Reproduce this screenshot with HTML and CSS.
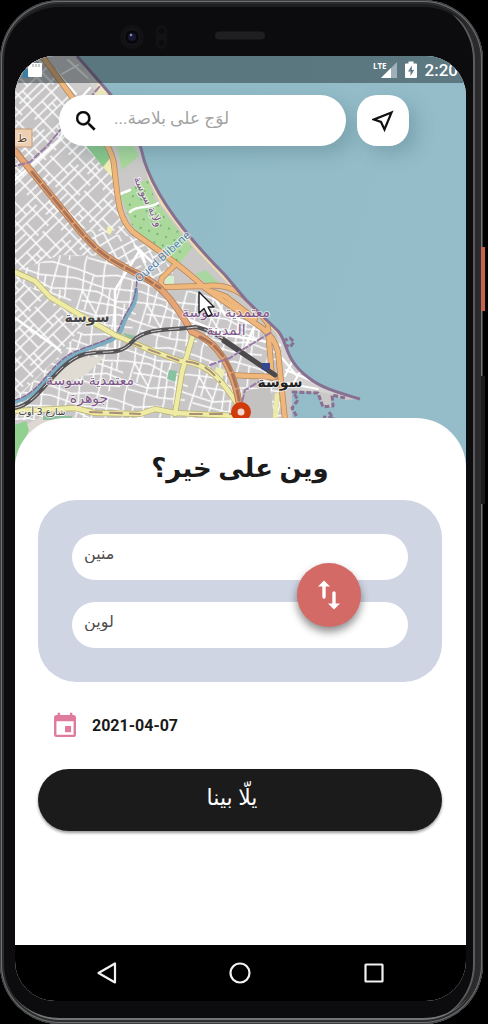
FILE: index.html
```html
<!DOCTYPE html>
<html lang="ar">
<head>
<meta charset="utf-8">
<meta name="viewport" content="width=device-width, initial-scale=1">
<title>وين على خير؟</title>
<link rel="stylesheet" href="styles.css">
</head>
<body>
<div class="phone">
  <span class="power-key"></span>
  <span class="volume-key"></span>
  <header class="bezel">
    <svg class="sensors" viewBox="0 0 150 28" aria-hidden="true">
      <circle cx="14" cy="14" r="12" fill="#121214"/>
      <circle cx="14" cy="14" r="7.500" fill="#08080c" stroke="#1a1b20"/>
      <circle cx="14" cy="14" r="4" fill="#171a30"/>
      <circle cx="13" cy="12" r="1.200" fill="#8d92b5"/>
      <rect x="38" y="2" width="11" height="24" rx="5.500" fill="#121214"/>
      <circle cx="43.500" cy="8" r="4" fill="#0c0c0e" stroke="#161618"/>
      <circle cx="43.500" cy="20" r="4" fill="#0c0c0e" stroke="#161618"/>
      <rect x="97" y="8.500" width="50" height="8" rx="4" fill="#1f1f21"/>
    </svg>
  </header>

  <div class="screen">
    <section class="map">
      <svg class="map-art" viewBox="15 56 451 412" preserveAspectRatio="xMinYMin slice" aria-hidden="true">
        <defs>
          <linearGradient id="sea" x1="0" y1="0" x2="1" y2="0.300">
            <stop offset="0" stop-color="#8fbac6"/>
            <stop offset="1" stop-color="#95bdc9"/>
          </linearGradient>
          <pattern id="grid-a" width="58" height="49" patternUnits="userSpaceOnUse" patternTransform="rotate(-44)">
            <rect width="58" height="49" fill="#c6c4c4"/>
            <path d="M0 4H58M0 12H32M0 19H58M26 26H58M0 32H58M0 39H30M0 45H58M5 0V49M18 4V32M31 0V49M44 0V26M52 19V49M11 32V45M24 12V19M38 32V49" stroke="#fff" stroke-width="1.500" fill="none"/>
          </pattern>
          <pattern id="grid-b" width="62" height="54" patternUnits="userSpaceOnUse" patternTransform="rotate(-28)">
            <rect width="62" height="54" fill="#c6c4c4"/>
            <path d="M0 5L62 5M0 13L28 15L62 13M0 22H62M14 29L62 31M0 38L62 38M0 46L34 48L62 46M4 0L4 54M13 5L15 22M24 0L24 54M33 13L36 38M44 0L44 54M54 5L52 31M14 22V46M56 38V54M34 38V54" stroke="#fff" stroke-width="1.500" fill="none"/>
          </pattern>
          <pattern id="grid-c" width="66" height="60" patternUnits="userSpaceOnUse" patternTransform="rotate(12)">
            <rect width="66" height="60" fill="#c8c6c6"/>
            <path d="M0 7L20 10L40 5L66 7M0 16L30 20L66 16M0 27L24 25L44 31L66 27M10 37L40 35L66 39M0 46L28 49L50 43L66 46M8 54L40 56L66 53M6 0L9 27L6 60M17 9L15 46M26 0L29 26L26 60M36 20L38 56M46 0L44 31L46 60M56 6L59 38M53 31L56 60M9 27L28 48" stroke="#fff" stroke-width="1.500" fill="none"/>
          </pattern>
          <pattern id="trees" width="9" height="9" patternUnits="userSpaceOnUse" patternTransform="rotate(20)">
            <rect width="9" height="9" fill="#abd99b"/>
            <circle cx="3" cy="4" r="0.900" fill="#5fa264"/>
          </pattern>
          <clipPath id="land">
            <path d="M15 56H77L105 88C125 110 138 132 144 160C155 195 182 232 225 275L246 300L278 331C288 342 284 360 309 378C323 389 340 393 360 399L345 400L331 395L332 407L323 407L318 393L292 391L292 418V470H15Z"/>
          </clipPath>
        </defs>
        <rect x="15" y="56" width="451" height="412" fill="url(#sea)"/>
        <g clip-path="url(#land)" fill="none" stroke-linecap="round" stroke-linejoin="round">
          <rect x="15" y="56" width="350" height="412" fill="#cbc9c8"/>
          <path d="M15 56H42L85 112L111 150L120 215L137 238L80 228L15 152Z" fill="url(#grid-a)"/>
          <path d="M15 152L80 228L137 238L175 270L160 290L100 262L60 300L15 275Z" fill="url(#grid-b)"/>
          <path d="M15 152L100 252L60 300L15 272Z" fill="url(#grid-a)"/>
          <path d="M60 255L105 256L165 292L205 290L275 340L285 380L285 420H15V272Z" fill="url(#grid-c)"/>
          <path d="M15 278L85 320L65 350L15 400Z" fill="url(#grid-a)"/>
          <path d="M45 56L80 58L98 85L75 95Z" fill="#cfcdcd"/>
          <path d="M62 74L78 65M55 70L76 94M68 60L90 80" stroke="#fff" stroke-width="2"/>
          <path d="M80 56L106 88L114 96L98 96L90 84Z" fill="#d9d5d1"/>
          <path d="M99 82L109 92L104 98L92 98Z" fill="#f1ebc0"/>
          <path d="M86 146H107L110 158L104 168Z" fill="#8ccb8c"/>
          <path d="M103 167L111 157L112 177Z" fill="#f3f0b5"/>
          <path d="M117 146H134L139 156L122 170Z" fill="#a9d99b"/>
          <path d="M120 194L148 179L155 200L192 248L176 268L150 247L132 225Z" fill="url(#trees)"/>
          <path d="M195 274L206 270L220 284L207 284Z" fill="#a8d7a0"/>
          <path d="M163 276H174V286H163Z" fill="#d6eed0"/>
          <path d="M108 226L113 229L110 235L106 232Z" fill="#f3f0b5"/>
          <path d="M48 370L80 358L105 356L85 376L45 388Z" fill="#e0dcd4"/>
          <path d="M14 437L26 425L40 417H78V470H15Z" fill="#ddd9d2"/>
          <path d="M15 425L26 421L29 430L15 462Z" fill="#91d18f"/>
          <path d="M169 370L177 371L175 382L167 379Z" fill="#88c2a0"/>
          <path d="M43 416H72V420H43ZM123 333L140 337L130 342Z" fill="#90bfa0"/>
          <path d="M216 367L225 370L221 383L214 378Z" fill="#efedb2"/>
          <path d="M243 392L270 386L275 425H243Z" fill="#c4c2c1"/>
          <path d="M276 322L286 340L292 370L345 397L320 392L292 389L281 382Z" fill="#d5d3d2"/>
          <path d="M282 358L297 376M286 370L310 380M292 362L285 376M300 372L292 386M280 382L318 389" stroke="#fff" stroke-width="2"/>
          <path d="M115 96L138 135L150 178L163 204L197 248L240 293L283 337" stroke="#f0dfae" stroke-width="4"/>
          <path d="M130 212C138 204 148 210 158 203M118 195L130 190M135 246L152 262M15 180L60 139L75 104L90 88" stroke="#fff" stroke-width="2.500"/>
          <path d="M115 350V290L140 250L145 262M60 350L15 318M185 318L225 335L258 340L280 345M210 290L225 315L255 325L242 355" stroke="#fff" stroke-width="2.500"/>
          <path d="M15 402C45 395 52 362 80 352C100 343 118 342 122 328C127 310 137 308 136 290" stroke="#7caec2" stroke-width="4"/>
          <path d="M15 400C43 393 50 360 79 350C98 342 116 340 120 326C127 308 137 304 137 275" stroke="#866a99" stroke-width="1.500" stroke-dasharray="5 2"/>
          <path d="M15 272L35 281L50 297L80 315L115 335L150 350L180 361C210 362 225 385 238 405M15 411L75 408L95 413L140 414L155 409L175 413L238 416M193 335L182 372L175 414" stroke="#b9b26d" stroke-width="6"/>
          <path d="M15 272L35 281L50 297L80 315L115 335L150 350L180 361C210 362 225 385 238 405M15 411L75 408L95 413L140 414L155 409L175 413L238 416M193 335L182 372L175 414M277 395L275 420" stroke="#eeeba4" stroke-width="4.500"/>
          <path d="M130 342L150 350L180 361C200 362 210 368 220 382M90 412L140 414M190 414H235" stroke="#a98e78" stroke-width="2" stroke-dasharray="12 8"/>
          <path d="M42 56L75 101C95 130 112 145 114 165C118 200 118 218 133 232C160 252 180 264 205 288L262 328Q275 338 278 352L285 420M176 264L162 278Q159 287 166 287L205 286C235 282 250 298 268 324M208 290L225 296L255 319M230 375L275 377M268 328L272 378" stroke="#b7875a" stroke-width="6"/>
          <path d="M42 56L75 101C95 130 112 145 114 165C118 200 118 218 133 232C160 252 180 264 205 288L262 328Q275 338 278 352L285 420M176 264L162 278Q159 287 166 287L205 286C235 282 250 298 268 324M208 290L225 296L255 319M230 375L275 377M268 328L272 378" stroke="#efb77b" stroke-width="4.500"/>
          <path d="M15 151L75 225C95 250 105 258 140 275C160 285 172 298 192 332C220 342 234 370 240 408" stroke="#b7845d" stroke-width="7"/>
          <path d="M15 151L75 225C95 250 105 258 140 275C160 285 172 298 192 332C220 342 234 370 240 408" stroke="#e5a576" stroke-width="5"/>
          <path d="M32 172L75 225C95 250 105 258 140 275L160 288M200 337C222 346 234 370 239 400" stroke="#ab7459" stroke-width="3" stroke-dasharray="13 4"/>
          <path d="M15 408C40 404 55 362 85 354C105 350 120 356 132 342C145 327 170 331 195 327C215 329 240 352 275 375" stroke="#555355" stroke-width="4"/>
          <path d="M15 408C40 404 55 362 85 354C105 350 120 356 132 342C145 327 170 331 195 327C215 329 240 352 275 375" stroke="#d5d3d3" stroke-width="1" stroke-dasharray="10 8"/>
          <path d="M224 341L275 375" stroke="#4b494b" stroke-width="5"/>
          <path d="M262 363H270V370H262Z" fill="#354790"/>
          <path d="M105 80L84 105L62 128L48 145L30 162L15 166M210 365L230 358L242 350L270 333M240 410L245 390L262 380" stroke="#9a7ba5" stroke-width="2" stroke-dasharray="6 3"/>
        </g>
        <g fill="none" stroke="#877091" stroke-linejoin="round">
          <path d="M77 56L105 88C125 110 138 132 144 160C155 195 182 232 225 275L246 300L278 331C288 342 284 360 309 378C323 389 340 393 360 399" stroke-width="3"/>
          <path d="M283 341L290 338L294 342L290 347L286 345M345 398L332 395L333 406L323 407L318 393L293 392L298 400L292 408L297 417M329 412L333 418L323 417" stroke-width="3" stroke-dasharray="5 2"/>
        </g>
        <rect x="10" y="129" width="22" height="18" rx="1" fill="#edcfb2" stroke="#c29a7a"/>
        <g class="map-labels">
          <text class="place-small" x="22" y="142">ط</text>
          <text class="river-name" transform="translate(139 283) rotate(-42)">Oued Blibene</text>
          <text class="district district-tilt" transform="translate(145 203) rotate(65)">ولاية سوسة</text>
          <text class="city" x="87" y="322">سوسة</text>
          <text class="city city-dark" x="280" y="387">سوسة</text>
          <text class="district" x="226" y="317">معتمدية سوسة</text>
          <text class="district" x="226" y="335">المدينة</text>
          <text class="district" x="90" y="385">معتمدية سوسة</text>
          <text class="district" x="89" y="403">جوهرة</text>
          <text class="street" x="42" y="415">شارع 3 أوت</text>
        </g>
        <path d="M231 412a10 10 0 0 1 20 0c0 6-6 9-10 16c-4-7-10-10-10-16z" fill="#d13b0c"/>
        <circle cx="241" cy="412" r="3.500" fill="#f0d9d0"/>
        <path d="M199 292v21l5-4.500 4 8 4-2-4-7.500h6z" fill="#fff" stroke="#1b1b22" stroke-width="1.400" stroke-linejoin="round"/>
      </svg>

      <div class="status-bar">
        <svg class="card-icon" viewBox="0 0 20 18" aria-hidden="true">
          <path d="M0 8h6v9H0z" fill="#3a7fa5"/>
          <path d="M9 2h9a1 1 0 0 1 1 1v12a1 1 0 0 1-1 1H6a1 1 0 0 1-1-1V6z" fill="#fff"/>
          <path d="M10 3v3M13 3v3M16 3v3" stroke="#9a9a9a"/>
        </svg>
        <div class="signal">
          <span class="network">LTE</span>
          <svg class="signal-icon" viewBox="0 0 16 16" aria-hidden="true">
            <path d="M16 0V16H0z" fill="#9fb1b8"/>
            <path d="M10 6V16H0z" fill="#fff"/>
          </svg>
        </div>
        <svg class="battery-icon" viewBox="0 0 12 18" aria-hidden="true">
          <path d="M3.500 0.500h5v2H11a1 1 0 0 1 1 1V16a1 1 0 0 1-1 1H1a1 1 0 0 1-1-1V3.500a1 1 0 0 1 1-1h2.500z" fill="#fff"/>
          <path d="M6.800 4.500L3 10.500h2.500V15L9.200 9H6.800z" fill="#5f7b85"/>
        </svg>
        <span class="clock">2:20</span>
      </div>

      <form class="search-row">
        <label class="search-box">
          <svg class="search-icon" viewBox="3 3 18 18" aria-hidden="true">
            <path d="M15.500 14h-.79l-.28-.27A6.471 6.471 0 0 0 16 9.500 6.500 6.500 0 1 0 9.500 16c1.610 0 3.090-.59 4.230-1.570l.27.28v.79l5 4.990L20.490 19l-4.990-5zm-6 0C7.010 14 5 11.990 5 9.500S7.010 5 9.500 5 14 7.010 14 9.500 11.990 14 9.500 14z" fill="#090909" stroke="#090909" stroke-width="0.300"/>
          </svg>
          <input class="search-input" type="text" dir="rtl" placeholder="لوَج على بلاصة..." aria-label="لوَج على بلاصة">
        </label>
        <button class="locate" type="button" aria-label="موقعي">
          <svg viewBox="0 0 22 22" aria-hidden="true">
            <path d="M19.500 2.500L2 9.500L9 12L12.500 19.500Z" fill="none" stroke="#111" stroke-width="2.200" stroke-linejoin="miter"/>
          </svg>
        </button>
      </form>
    </section>

    <main class="sheet">
      <h1 class="title" dir="rtl">وين على خير؟</h1>
      <div class="trip">
        <input class="field" type="text" dir="rtl" placeholder="منين" aria-label="منين">
        <input class="field" type="text" dir="rtl" placeholder="لوين" aria-label="لوين">
        <button class="swap" type="button" aria-label="تبديل">
          <svg viewBox="0 0 24 30" aria-hidden="true">
            <path d="M7 17V4M17 13V26" stroke="#fff" stroke-width="3.400" stroke-linecap="round"/>
            <path d="M7 0.500L13 6.500H1ZM17 29.500L11 23.500H23Z" fill="#fff"/>
          </svg>
        </button>
      </div>
      <button class="date" type="button">
        <svg viewBox="3 1 18 21" aria-hidden="true">
          <path d="M17 12h-5v5h5v-5zM16 1v2H8V1H6v2H5c-1.110 0-1.990.9-1.990 2L3 19a2 2 0 0 0 2 2h14c1.100 0 2-.9 2-2V5c0-1.100-.9-2-2-2h-1V1h-2zm3 18H5V8h14v11z" fill="#df7c9e"/>
        </svg>
        <time datetime="2021-04-07">2021-04-07</time>
      </button>
      <button class="go" type="submit" dir="rtl">يلّا بينا</button>
    </main>

    <nav class="system-nav">
      <button type="button" aria-label="رجوع"><svg viewBox="0 0 24 24" aria-hidden="true"><path d="M20 2.500V21.500L3.500 12Z"/></svg></button>
      <button type="button" aria-label="الرئيسية"><svg viewBox="0 0 24 24" aria-hidden="true"><circle cx="12" cy="12" r="9.500"/></svg></button>
      <button type="button" aria-label="التطبيقات"><svg viewBox="0 0 24 24" aria-hidden="true"><rect x="3.500" y="3.500" width="17" height="17" rx="0.500"/></svg></button>
    </nav>
  </div>
</div>
</body>
</html>
```
FILE: styles.css
```css
* {
  box-sizing: border-box;
}

body {
  margin: 0;
  background: #000;
  font-family: Roboto, "Noto Sans", "DejaVu Sans", sans-serif;
}

button,
input {
  margin: 0;
  border: 0;
  font: inherit;
}

button {
  display: flex;
  align-items: center;
  justify-content: center;
  padding: 0;
  background: none;
}

.phone {
  position: relative;
  display: flex;
  flex-direction: column;
  min-height: 100vh;
  margin-right: 5px;
  padding: 0 17px 23px 15px;
  border-radius: 60px;
  background: #0c0b0e;
  box-shadow:
    inset 0 0 0 1px #3c3e3f,
    inset 0 0 0 2px #6d7070,
    inset 0 0 0 4px #2c2d2e,
    inset 0 -6px 0 #737674,
    inset 0 8px 0 -1px #1d1e1f,
    inset -8px 0 0 #2a2a2c,
    inset -10px 0 0 #5b5b5c;
}

.power-key,
.volume-key {
  position: absolute;
  right: -2px;
  width: 4px;
}

.power-key {
  top: 247px;
  height: 64px;
  background: #c9614d;
}

.volume-key {
  top: 376px;
  height: 128px;
  background: #1b1b1c;
}

.bezel {
  height: 56px;
  padding: 23px 0 0 103px;
}

.sensors {
  display: block;
  width: 150px;
  height: 28px;
}

.screen {
  display: flex;
  flex: 1;
  flex-direction: column;
  overflow: hidden;
  border-radius: 40px;
  background: #fff;
}

.map {
  position: relative;
  min-height: 412px;
  background: #97bfcb;
}

.map-art {
  position: absolute;
  inset: 0;
  width: 100%;
  height: 100%;
}

.map-labels {
  font-family: "DejaVu Sans", sans-serif;
  text-anchor: middle;
  paint-order: stroke;
  stroke: rgba(255, 255, 255, 0.6);
  stroke-width: 2px;
}

.district {
  fill: #7d5588;
  font-size: 14px;
}

.district-tilt {
  font-size: 11px;
}

.city {
  fill: #444;
  font-size: 14px;
  font-weight: 700;
}

.city-dark {
  fill: #222;
}

.street {
  fill: #333;
  font-size: 9px;
}

.place-small {
  fill: #5c3e26;
  font-size: 11px;
}

.river-name {
  fill: #4c7fae;
  font-family: "Noto Sans", sans-serif;
  font-size: 11px;
  text-anchor: start;
}

.status-bar {
  position: relative;
  display: flex;
  align-items: center;
  gap: 8px;
  height: 27px;
  padding: 0 8px;
  background: rgba(25, 35, 40, 0.45);
  color: #fff;
}

.card-icon {
  width: 20px;
  height: 18px;
  margin-right: auto;
}

.signal {
  display: flex;
  align-items: flex-end;
}

.network {
  align-self: flex-start;
  margin-right: -6px;
  font-family: "Open Sans", sans-serif;
  font-size: 8px;
  font-weight: 700;
  line-height: 8px;
}

.signal-icon {
  width: 16px;
  height: 16px;
}

.battery-icon {
  width: 12px;
  height: 18px;
}

.clock {
  font-size: 17px;
  font-weight: 500;
}

.search-row {
  position: relative;
  display: flex;
  gap: 11px;
  padding: 12px 57px 0 44px;
}

.search-box {
  display: flex;
  flex: 1;
  align-items: center;
  gap: 18px;
  min-width: 0;
  height: 51px;
  padding: 0 24px 0 17px;
  border-radius: 26px;
  background: #fff;
  box-shadow: 8px 8px 18px rgba(50, 90, 105, 0.25);
}

.search-icon {
  flex: none;
  width: 20px;
  height: 20px;
}

.search-input {
  flex: 1;
  min-width: 0;
  padding: 0 0 6px;
  background: none;
  font-size: 17px;
  text-align: left;
}

.search-input::placeholder {
  color: #a3a3a3;
  opacity: 1;
}

.locate {
  width: 52px;
  height: 51px;
  border-radius: 20px;
  background: #fff;
  box-shadow: 8px 8px 18px rgba(50, 90, 105, 0.25);
}

.locate svg {
  width: 22px;
  height: 22px;
}

.sheet {
  position: relative;
  flex: 1;
  margin-top: -50px;
  padding: 28px 24px 28px 23px;
  border-radius: 50px 50px 0 0;
  background: #fff;
}

.title {
  margin: 0 0 10px;
  color: #1a1a1a;
  font-size: 26px;
  font-weight: 700;
  line-height: 44px;
  text-align: center;
}

.trip {
  position: relative;
  display: grid;
  gap: 22px;
  padding: 34px;
  border-radius: 38px;
  background: #d0d5e4;
}

.field {
  width: 100%;
  height: 46px;
  padding: 0 12px 8px;
  border-radius: 23px;
  background: #fff;
  font-size: 16px;
  text-align: left;
}

.field::placeholder {
  color: #4c4c4c;
  opacity: 1;
}

.swap {
  position: absolute;
  top: 63px;
  right: 81px;
  width: 64px;
  height: 64px;
  border-radius: 50%;
  background: #d36a65;
  box-shadow: 0 5px 9px rgba(0, 0, 0, 0.45);
}

.swap svg {
  width: 24px;
  height: 30px;
}

.date {
  gap: 16px;
  margin: 30px 0 30px 16px;
  color: #1a1a1a;
  font-size: 16px;
  font-weight: 700;
}

.date svg {
  width: 22px;
  height: 27px;
}

.go {
  width: 100%;
  height: 62px;
  padding: 0 16px 6px 0;
  border-radius: 31px;
  background: #1b1b1b;
  box-shadow: 0 2px 3px rgba(0, 0, 0, 0.4);
  color: #fff;
  font-size: 22px;
}

.system-nav {
  display: grid;
  grid-template-columns: repeat(3, 1fr);
  height: 56px;
  padding: 0 25px;
  background: #000;
}

.system-nav svg {
  width: 24px;
  height: 24px;
  fill: none;
  stroke: #f2f2f2;
  stroke-width: 2.2;
  stroke-linejoin: round;
}
```
